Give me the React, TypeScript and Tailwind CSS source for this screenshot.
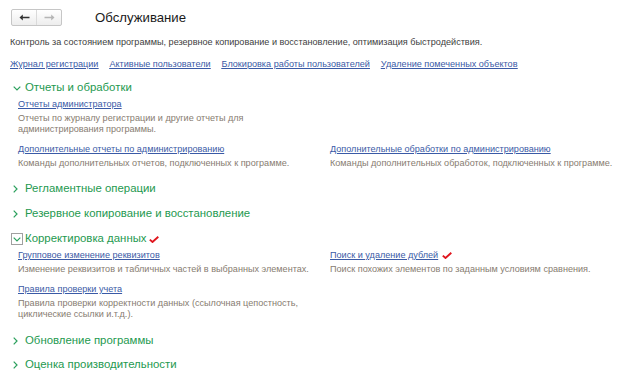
import React from "react";

const F = { fontFamily: '"Liberation Sans", Arial, sans-serif' };

function Chevron({ open }: { open: boolean }) {
  return open ? (
    <svg width="8" height="5" viewBox="0 0 8 5" className="shrink-0">
      <path d="M0.7 0.7 L4 4 L7.3 0.7" fill="none" stroke="#2aa05c" strokeWidth="1.2" />
    </svg>
  ) : (
    <svg width="5" height="8" viewBox="0 0 5 8" className="shrink-0">
      <path d="M0.7 0.7 L4 4 L0.7 7.3" fill="none" stroke="#2aa05c" strokeWidth="1.2" />
    </svg>
  );
}

function Check() {
  return (
    <svg width="10" height="7" viewBox="0 0 10 7" className="shrink-0">
      <path d="M0.8 3.6 L3.5 6 L9.3 0.8" fill="none" stroke="#e0161e" strokeWidth="1.9" />
    </svg>
  );
}

function Group({ title, open, mt }: { title: string; open?: boolean; mt: string }) {
  return (
    <div className={`flex items-center h-[16px] text-[11.4px] text-[#24994f] ${mt}`}>
      <div className="w-[25px] pl-[13px] flex items-center">
        <Chevron open={!!open} />
      </div>
      <span>{title}</span>
    </div>
  );
}

function Item({ link, desc, check }: { link: string; desc: React.ReactNode; check?: boolean }) {
  return (
    <div className="flex flex-col">
      <div className="flex items-center gap-[4px] h-[12px]">
        <a className="text-[9.1px] leading-[12px] text-[#3a5aa6] underline">{link}</a>
        {check && <Check />}
      </div>
      <div className="text-[9.1px] leading-[11px] text-[#877c70] mt-[3px]">{desc}</div>
    </div>
  );
}

export default function App() {
  return (
    <div style={F} className="w-[628px] h-[389px] bg-white overflow-hidden pt-[9px]">
      <div className="flex items-center h-[17px] pl-[11px]">
        <div className="flex h-[17px] w-[51px] rounded-[2px] border border-[#c6c6c6] bg-gradient-to-b from-white to-[#ededed]">
          <div className="flex-1 flex items-center justify-center border-r border-[#dadada]">
            <svg width="11" height="7" viewBox="0 0 11 7">
              <path d="M0.5 3.5 L3.8 0.6 L3.8 2.8 L10.5 2.8 L10.5 4.2 L3.8 4.2 L3.8 6.4 Z" fill="#333" />
            </svg>
          </div>
          <div className="flex-1 flex items-center justify-center">
            <svg width="11" height="7" viewBox="0 0 11 7">
              <path d="M10.5 3.5 L7.2 0.6 L7.2 2.8 L0.5 2.8 L0.5 4.2 L7.2 4.2 L7.2 6.4 Z" fill="#b5b5b5" />
            </svg>
          </div>
        </div>
        <div className="ml-[33px] text-[13.2px] text-[#1a1a1a]">Обслуживание</div>
      </div>

      <div className="pl-[10px] mt-[10px] h-[12px] text-[9.1px] leading-[12px] text-[#404040]">
        Контроль за состоянием программы, резервное копирование и восстановление, оптимизация быстродействия.
      </div>

      <div className="pl-[10px] mt-[10px] h-[12px] flex gap-[11px] text-[9.1px] leading-[12px] text-[#3a5aa6] underline">
        <a>Журнал регистрации</a>
        <a>Активные пользователи</a>
        <a>Блокировка работы пользователей</a>
        <a>Удаление помеченных объектов</a>
      </div>

      <Group title="Отчеты и обработки" open mt="mt-[10px]" />
      <div className="pl-[18px] mt-[2px] flex flex-col">
        <Item
          link="Отчеты администратора"
          desc={<>Отчеты по журналу регистрации и другие отчеты для<br />администрирования программы.</>}
        />
        <div className="grid grid-cols-[312px_1fr] mt-[8px]">
          <Item link="Дополнительные отчеты по администрированию" desc="Команды дополнительных отчетов, подключенных к программе." />
          <Item link="Дополнительные обработки по администрированию" desc="Команды дополнительных обработок, подключенных к программе." />
        </div>
      </div>

      <Group title="Регламентные операции" mt="mt-[12px]" />
      <Group title="Резервное копирование и восстановление" mt="mt-[9px]" />

      <div className="mt-[9px] flex items-center h-[16px] text-[11.4px] text-[#24994f]">
        <div className="w-[25px] pl-[11px] flex items-center">
          <div className="w-[12px] h-[12px] border border-[#a0a0a0] bg-white flex items-center justify-center">
            <svg width="8" height="5" viewBox="0 0 8 5">
              <path d="M0.7 0.7 L4 4 L7.3 0.7" fill="none" stroke="#2aa05c" strokeWidth="1.2" />
            </svg>
          </div>
        </div>
        <span>Корректировка данных</span>
        <span className="ml-[2px] flex"><Check /></span>
      </div>
      <div className="pl-[18px] mt-[2px] flex flex-col">
        <div className="grid grid-cols-[312px_1fr]">
          <Item link="Групповое изменение реквизитов" desc="Изменение реквизитов и табличных частей в выбранных элементах." />
          <Item link="Поиск и удаление дублей" check desc="Поиск похожих элементов по заданным условиям сравнения." />
        </div>
        <div className="mt-[8px]">
          <Item
            link="Правила проверки учета"
            desc={<>Правила проверки корректности данных (ссылочная цепостность,<br />циклические ссылки и.т.д.).</>}
          />
        </div>
      </div>

      <Group title="Обновление программы" mt="mt-[13px]" />
      <Group title="Оценка производительности" mt="mt-[8px]" />
    </div>
  );
}
